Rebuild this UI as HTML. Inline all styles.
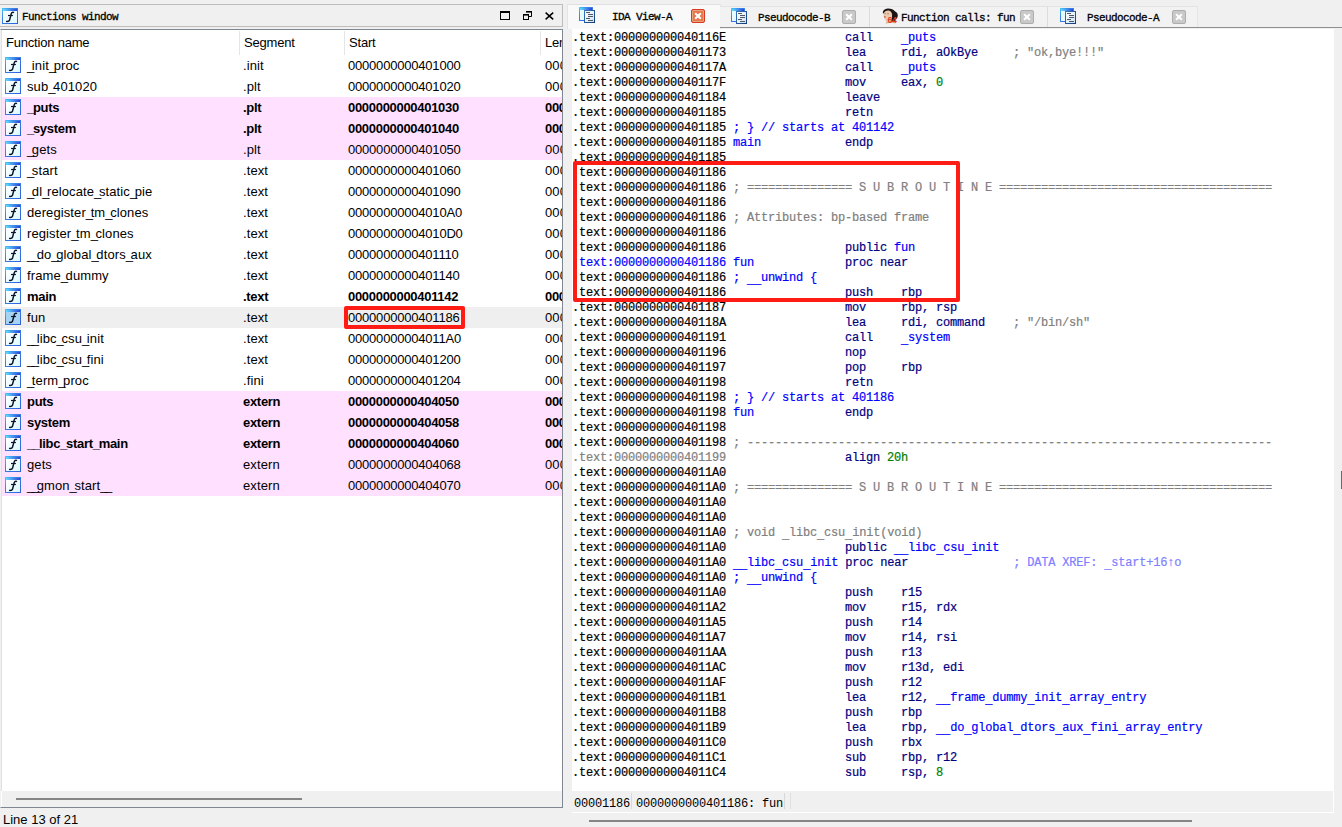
<!DOCTYPE html>
<html><head><meta charset="utf-8">
<style>
html,body{margin:0;padding:0;}
body{width:1342px;height:827px;overflow:hidden;background:#f0f0f0;position:relative;font-family:"Liberation Sans",sans-serif;}
.abs{position:absolute;}
/* left title bar */
#ltitle{position:absolute;left:0;top:4px;width:562px;height:21px;border:1px solid #bdbdbd;border-left:none;background:#f0f0f0;}
#ltitle .tt{position:absolute;left:22px;top:6px;font-family:"Liberation Mono",monospace;font-size:11px;letter-spacing:-0.6px;-webkit-text-stroke:0.3px #000;color:#000;}
#llist{overflow:hidden;position:absolute;left:1px;top:29px;width:561px;height:778px;border:1px solid #7f8892;border-left:1px solid #f0f0f0;border-right:1px solid #7f8892;border-top:1px solid #7f8892;background:#fff;box-sizing:border-box;width:563px;height:779px;left:0;}
.hdr{position:absolute;top:1px;height:25px;font-size:13px;color:#000;letter-spacing:-0.2px;}
.sep{position:absolute;top:1px;width:1px;height:24px;background:#e5e5e5;}
.r{position:absolute;left:1px;width:560px;height:21px;font-size:13px;color:#000;white-space:nowrap;letter-spacing:0.1px;}
.r.pk{background:#ffe0ff;}
.r.sel{background:#efefef;}
.r.b{font-weight:bold;letter-spacing:-0.3px;}
.r .fi{position:absolute;left:3px;top:2px;}
.r > span{position:absolute;top:3px;} .u{letter-spacing:-2.4px;} .r.b .u{letter-spacing:-1.3px;}
.c1{left:25px;} .c2{left:241px;} .c3{left:346px;letter-spacing:-0.2px;} .r.b .c3{letter-spacing:-0.3px;} .c4{left:543px;}
#lhs{position:absolute;left:1px;top:761px;width:560px;height:16px;background:#f0f0f0;}
#lhs .th{position:absolute;left:14px;top:7px;width:286px;height:2px;background:#858585;}
#status{position:absolute;left:3px;top:812px;font-size:13px;color:#000;}
/* right */
.tab{position:absolute;top:6px;height:20px;background:#f2f2f2;border-top:1px solid #e3e3e3;}
.tab > *{margin-top:-1px;}
.tab.act{top:4px;height:24px;background:#f9f9f9;border-left:1px solid #e4e4e4;border-top:1px solid #e0e0e0;border-right:1px solid #e6e6e6;}
.tab.act > *{margin-top:0;}
.tabtxt{position:absolute;top:6px;font-family:"Liberation Mono",monospace;font-size:11px;letter-spacing:-0.6px;-webkit-text-stroke:0.3px #000;color:#000;white-space:pre;}
#tabline{position:absolute;left:720px;top:27px;width:622px;height:1px;background:#8f8f8f;}
#code{position:absolute;left:572px;top:29px;width:762px;height:762px;background:#fff;overflow:hidden;}
.l{position:absolute;left:0px;height:15px;line-height:15px;white-space:pre;font-family:"Liberation Mono",monospace;font-size:12px;letter-spacing:-0.2px;color:#000;-webkit-text-stroke-width:0.2px;}
.l i{font-style:normal;position:relative;top:1.5px;} .a{color:#000;} .ag{color:#808080;} .ab{color:#0000ff;}
.k{color:#000080;} .n{color:#0000ff;} .c{color:#808080;} .x{color:#8080ff;} .g{color:#008000;}
#rstat{position:absolute;left:572px;top:791px;width:761px;height:21px;background:#f0f0f0;border-bottom:1px solid #fff;border-right:1px solid #fff;}
#rstat .st{position:absolute;top:6px;font-family:"Liberation Mono",monospace;font-size:12px;letter-spacing:-0.2px;color:#000;white-space:pre;}
#rhs{position:absolute;left:589px;top:820px;width:603px;height:2px;background:#858585;}
#vs{position:absolute;left:1334px;top:29px;width:8px;height:762px;background:#f0f0f0;}
#vs .th{position:absolute;left:7px;top:442px;width:1px;height:18px;background:#6a6a6a;}
.redbox{position:absolute;border:4px solid #ff1c14;border-radius:2px;box-sizing:border-box;}
.cls{position:absolute;width:14px;height:14px;box-sizing:border-box;border:1px solid #adadad;border-radius:2px;background:#c9c9c9;}
.cls:before,.cls:after{content:"";position:absolute;left:2px;top:5px;width:8px;height:2px;background:#fff;transform:rotate(45deg);}
.cls:after{transform:rotate(-45deg);}
.cls.red{border-color:#d93a22;background:#e47a4c;box-shadow:inset 0 0 0 1px #eda07e;}
</style></head><body>
<svg width="0" height="0" style="position:absolute">
<defs>
<linearGradient id="fbar" x1="0" y1="0" x2="1" y2="0"><stop offset="0" stop-color="#62dcff"/><stop offset="1" stop-color="#2a44d8"/></linearGradient>
<linearGradient id="fbody" x1="0" y1="0" x2="1" y2="1"><stop offset="0" stop-color="#ffffff"/><stop offset="1" stop-color="#dcfaff"/></linearGradient>
<linearGradient id="fbord" x1="0" y1="0" x2="1" y2="1"><stop offset="0" stop-color="#48c8f8"/><stop offset="0.35" stop-color="#3a82e8"/><stop offset="1" stop-color="#3060d8"/></linearGradient>
<linearGradient id="dbody" x1="0" y1="0" x2="1" y2="1"><stop offset="0" stop-color="#ffffff"/><stop offset="1" stop-color="#cfe2fa"/></linearGradient>
<linearGradient id="dbord" x1="0" y1="0" x2="1" y2="1"><stop offset="0" stop-color="#3c78c0"/><stop offset="1" stop-color="#103a78"/></linearGradient>
<symbol id="ficon" viewBox="0 0 16 16">
<rect x="0" y="0" width="16" height="16" fill="url(#fbord)"/>
<rect x="1" y="3" width="14" height="12" fill="url(#fbody)"/>
<rect x="1" y="1" width="14" height="2" fill="url(#fbar)"/>
<path d="M12.0 4.6 C10.8 3.9 9.6 4.5 9.2 6.0 L7.5 12.2 C7.2 13.3 6.3 13.7 4.0 13.4" fill="none" stroke="#0c1428" stroke-width="1.45"/>
<path d="M6.0 7.5 H10.9" stroke="#0c1428" stroke-width="1.2"/>
</symbol>
<symbol id="ficonsel" viewBox="0 0 16 16">
<rect x="0" y="0" width="16" height="16" fill="url(#fbord)"/>
<rect x="1" y="3" width="14" height="12" fill="#a6d3f2"/>
<rect x="1" y="1" width="14" height="2" fill="url(#fbar)"/>
<path d="M12.0 4.6 C10.8 3.9 9.6 4.5 9.2 6.0 L7.5 12.2 C7.2 13.3 6.3 13.7 4.0 13.4" fill="none" stroke="#0c1428" stroke-width="1.45"/>
<path d="M6.0 7.5 H10.9" stroke="#0c1428" stroke-width="1.2"/>
</symbol>
<symbol id="docicon" viewBox="0 0 16 16">
<rect x="0" y="0" width="14" height="14" rx="0.5" fill="url(#fbord)"/>
<rect x="1" y="3" width="12" height="10" fill="#e4fcff"/>
<rect x="1" y="1" width="12" height="2" fill="url(#fbar)"/>
<rect x="5" y="3" width="11" height="13" fill="url(#dbord)"/>
<rect x="6" y="4" width="9" height="11" fill="url(#dbody)"/>
<g fill="#505860"><rect x="7" y="5" width="4" height="1"/><rect x="9" y="7" width="5" height="1"/><rect x="9" y="9" width="5" height="1"/><rect x="7" y="11" width="4" height="1"/><rect x="9" y="13" width="5" height="1"/></g>
</symbol>
<symbol id="face" viewBox="0 0 16 16">
<path d="M3.5 15.6 C5 14.8 11 14.6 13.2 15.4 L12.5 13 L5 13 Z" fill="#dcae90"/>
<path d="M0.9 5.2 C0.5 2.6 2.6 0.6 5.6 0.4 C8.8 0.2 11.6 1.4 13.1 3.4 C14.8 4.1 16.1 5.8 15.7 8.2 C15.4 10.2 14.4 11.3 13.3 11.8 L12.2 13.5 L9.2 13.2 L9.4 6 C7.6 4 4.2 3.6 2.2 5.6 Z" fill="#1c1414"/>
<path d="M1.7 5.6 C2.4 3.2 4.8 2.2 7.4 2.7 C9.4 3.2 10.3 5.6 10.1 8.1 C9.9 10.6 9 12.6 7.5 13.6 C6 14.6 4.5 14.1 3.4 12.6 C2.2 10.9 1.3 8.2 1.7 5.6 Z" fill="#eccaae"/>
<rect x="2.4" y="5.4" width="1.6" height="0.8" fill="#9a7262"/>
<rect x="5.2" y="5.4" width="1.6" height="0.8" fill="#9a7262"/>
<ellipse cx="2.9" cy="8.9" rx="0.9" ry="0.7" fill="#b83a2a"/>
<text x="5.6" y="15.0" font-family="Liberation Sans" font-weight="bold" font-size="8.6" fill="#e43a1c" letter-spacing="-0.3">64</text>
</symbol>
</defs></svg>

<div id="ltitle">
  <svg class="abs" style="left:2px;top:3px" width="16" height="16"><use href="#ficon"/></svg>
  <div class="tt">Functions window</div>
  <svg class="abs" style="left:500px;top:6px" width="10" height="9" viewBox="0 0 10 9"><rect x="0.5" y="1" width="9" height="7.5" fill="none" stroke="#000" stroke-width="1"/><rect x="0" y="0" width="10" height="2" fill="#000"/></svg>
  <svg class="abs" style="left:523px;top:6px" width="9" height="9" viewBox="0 0 9 9"><path d="M3 0.5 H8.5 V5.5 H6" fill="none" stroke="#000"/><rect x="3" y="0" width="6" height="1.6" fill="#000"/><rect x="0.5" y="3.5" width="5" height="5" fill="#f0f0f0" stroke="#000"/><rect x="0" y="3" width="6" height="1.6" fill="#000"/></svg>
  <svg class="abs" style="left:545px;top:7px" width="9" height="8" viewBox="0 0 9 8"><path d="M0.6 0.6 L8.2 7.4 M8.2 0.6 L0.6 7.4" stroke="#000" stroke-width="1.5"/></svg>
</div>

<div id="llist">
  <div class="hdr" style="left:5px;top:5px">Function name</div>
  <div class="sep" style="left:238px"></div>
  <div class="hdr" style="left:243px;top:5px">Segment</div>
  <div class="sep" style="left:343px"></div>
  <div class="hdr" style="left:348px;top:5px">Start</div>
  <div class="sep" style="left:539px"></div>
  <div class="hdr" style="left:544px;top:5px">Len</div>
  <div style="position:absolute;left:0;top:0;">
<div class="r" style="top:25px"><svg class="fi" width="16" height="16"><use href="#ficon"/></svg><span class="c1"><span class="u">_</span>init<span class="u">_</span>proc</span><span class="c2">.init</span><span class="c3">0000000000401000</span><span class="c4">000</span></div>
<div class="r" style="top:46px"><svg class="fi" width="16" height="16"><use href="#ficon"/></svg><span class="c1">sub<span class="u">_</span>401020</span><span class="c2">.plt</span><span class="c3">0000000000401020</span><span class="c4">000</span></div>
<div class="r pk b" style="top:67px"><svg class="fi" width="16" height="16"><use href="#ficon"/></svg><span class="c1"><span class="u">_</span>puts</span><span class="c2">.plt</span><span class="c3">0000000000401030</span><span class="c4">000</span></div>
<div class="r pk b" style="top:88px"><svg class="fi" width="16" height="16"><use href="#ficon"/></svg><span class="c1"><span class="u">_</span>system</span><span class="c2">.plt</span><span class="c3">0000000000401040</span><span class="c4">000</span></div>
<div class="r pk" style="top:109px"><svg class="fi" width="16" height="16"><use href="#ficon"/></svg><span class="c1"><span class="u">_</span>gets</span><span class="c2">.plt</span><span class="c3">0000000000401050</span><span class="c4">000</span></div>
<div class="r" style="top:130px"><svg class="fi" width="16" height="16"><use href="#ficon"/></svg><span class="c1"><span class="u">_</span>start</span><span class="c2">.text</span><span class="c3">0000000000401060</span><span class="c4">000</span></div>
<div class="r" style="top:151px"><svg class="fi" width="16" height="16"><use href="#ficon"/></svg><span class="c1"><span class="u">_</span>dl<span class="u">_</span>relocate<span class="u">_</span>static<span class="u">_</span>pie</span><span class="c2">.text</span><span class="c3">0000000000401090</span><span class="c4">000</span></div>
<div class="r" style="top:172px"><svg class="fi" width="16" height="16"><use href="#ficon"/></svg><span class="c1">deregister<span class="u">_</span>tm<span class="u">_</span>clones</span><span class="c2">.text</span><span class="c3">00000000004010A0</span><span class="c4">000</span></div>
<div class="r" style="top:193px"><svg class="fi" width="16" height="16"><use href="#ficon"/></svg><span class="c1">register<span class="u">_</span>tm<span class="u">_</span>clones</span><span class="c2">.text</span><span class="c3">00000000004010D0</span><span class="c4">000</span></div>
<div class="r" style="top:214px"><svg class="fi" width="16" height="16"><use href="#ficon"/></svg><span class="c1"><span class="u">_</span><span class="u">_</span>do<span class="u">_</span>global<span class="u">_</span>dtors<span class="u">_</span>aux</span><span class="c2">.text</span><span class="c3">0000000000401110</span><span class="c4">000</span></div>
<div class="r" style="top:235px"><svg class="fi" width="16" height="16"><use href="#ficon"/></svg><span class="c1">frame<span class="u">_</span>dummy</span><span class="c2">.text</span><span class="c3">0000000000401140</span><span class="c4">000</span></div>
<div class="r b" style="top:256px"><svg class="fi" width="16" height="16"><use href="#ficon"/></svg><span class="c1">main</span><span class="c2">.text</span><span class="c3">0000000000401142</span><span class="c4">000</span></div>
<div class="r sel" style="top:277px"><svg class="fi" width="16" height="16"><use href="#ficonsel"/></svg><span class="c1">fun</span><span class="c2">.text</span><span class="c3">0000000000401186</span><span class="c4">000</span></div>
<div class="r" style="top:298px"><svg class="fi" width="16" height="16"><use href="#ficon"/></svg><span class="c1"><span class="u">_</span><span class="u">_</span>libc<span class="u">_</span>csu<span class="u">_</span>init</span><span class="c2">.text</span><span class="c3">00000000004011A0</span><span class="c4">000</span></div>
<div class="r" style="top:319px"><svg class="fi" width="16" height="16"><use href="#ficon"/></svg><span class="c1"><span class="u">_</span><span class="u">_</span>libc<span class="u">_</span>csu<span class="u">_</span>fini</span><span class="c2">.text</span><span class="c3">0000000000401200</span><span class="c4">000</span></div>
<div class="r" style="top:340px"><svg class="fi" width="16" height="16"><use href="#ficon"/></svg><span class="c1"><span class="u">_</span>term<span class="u">_</span>proc</span><span class="c2">.fini</span><span class="c3">0000000000401204</span><span class="c4">000</span></div>
<div class="r pk b" style="top:361px"><svg class="fi" width="16" height="16"><use href="#ficon"/></svg><span class="c1">puts</span><span class="c2">extern</span><span class="c3">0000000000404050</span><span class="c4">000</span></div>
<div class="r pk b" style="top:382px"><svg class="fi" width="16" height="16"><use href="#ficon"/></svg><span class="c1">system</span><span class="c2">extern</span><span class="c3">0000000000404058</span><span class="c4">000</span></div>
<div class="r pk b" style="top:403px"><svg class="fi" width="16" height="16"><use href="#ficon"/></svg><span class="c1"><span class="u">_</span><span class="u">_</span>libc<span class="u">_</span>start<span class="u">_</span>main</span><span class="c2">extern</span><span class="c3">0000000000404060</span><span class="c4">000</span></div>
<div class="r pk" style="top:424px"><svg class="fi" width="16" height="16"><use href="#ficon"/></svg><span class="c1">gets</span><span class="c2">extern</span><span class="c3">0000000000404068</span><span class="c4">000</span></div>
<div class="r pk" style="top:445px"><svg class="fi" width="16" height="16"><use href="#ficon"/></svg><span class="c1"><span class="u">_</span><span class="u">_</span>gmon<span class="u">_</span>start<span class="u">_</span><span class="u">_</span></span><span class="c2">extern</span><span class="c3">0000000000404070</span><span class="c4">000</span></div>
  </div>
  <div style="position:absolute;left:0;top:0;width:1px;height:761px;background:#e0e0e0"></div>
  <div id="lhs"><div class="th"></div></div>
</div>
<div id="status">Line 13 of 21</div>

<!-- tabs -->
<div class="tab act" style="left:567px;width:152px;">
  <svg class="abs" style="left:11px;top:2px" width="16" height="16"><use href="#docicon"/></svg>
  <div class="tabtxt" style="left:44px">IDA View-A</div>
  <div class="cls red" style="left:123px;top:4px"></div>
</div>
<div class="tab" style="left:720px;width:149px;border-right:1px solid #dcdcdc;">
  <svg class="abs" style="left:11px;top:2px" width="16" height="16"><use href="#docicon"/></svg>
  <div class="tabtxt" style="left:38px">Pseudocode-B</div>
  <div class="cls" style="left:122px;top:4px"></div>
</div>
<div class="tab" style="left:870px;width:177px;border-right:1px solid #dcdcdc;">
  <svg class="abs" style="left:12px;top:2px" width="16" height="16"><use href="#face"/></svg>
  <div class="tabtxt" style="left:31px">Function calls: fun</div>
  <div class="cls" style="left:150px;top:4px"></div>
</div>
<div class="tab" style="left:1048px;width:149px;border-right:1px solid #e4e4e4;">
  <svg class="abs" style="left:12px;top:2px" width="16" height="16"><use href="#docicon"/></svg>
  <div class="tabtxt" style="left:39px">Pseudocode-A</div>
  <div class="cls" style="left:124px;top:4px"></div>
</div>
<div id="tabline"></div>

<div id="code">
<div class="l" style="top:2px"><span class="a">.text:000000000040116E</span>                 <span class="k">call    </span><span class="n"><i>_</i>puts</span></div>
<div class="l" style="top:17px"><span class="a">.text:0000000000401173</span>                 <span class="k">lea     </span><span class="k">rdi, aOkBye</span>     <span class="c">; &quot;ok,bye!!!&quot;</span></div>
<div class="l" style="top:32px"><span class="a">.text:000000000040117A</span>                 <span class="k">call    </span><span class="n"><i>_</i>puts</span></div>
<div class="l" style="top:47px"><span class="a">.text:000000000040117F</span>                 <span class="k">mov     </span><span class="k">eax, </span><span class="g">0</span></div>
<div class="l" style="top:62px"><span class="a">.text:0000000000401184</span>                 <span class="k">leave</span></div>
<div class="l" style="top:77px"><span class="a">.text:0000000000401185</span>                 <span class="k">retn</span></div>
<div class="l" style="top:92px"><span class="a">.text:0000000000401185</span><span class="n"> ; } // starts at 401142</span></div>
<div class="l" style="top:107px"><span class="a">.text:0000000000401185</span><span class="n"> main</span>            <span class="k">endp</span></div>
<div class="l" style="top:122px"><span class="a">.text:0000000000401185</span></div>
<div class="l" style="top:137px"><span class="a">.text:0000000000401186</span></div>
<div class="l" style="top:152px"><span class="a">.text:0000000000401186</span><span class="c"> ; =============== S U B R O U T I N E =======================================</span></div>
<div class="l" style="top:167px"><span class="a">.text:0000000000401186</span></div>
<div class="l" style="top:182px"><span class="a">.text:0000000000401186</span><span class="c"> ; Attributes: bp-based frame</span></div>
<div class="l" style="top:197px"><span class="a">.text:0000000000401186</span></div>
<div class="l" style="top:212px"><span class="a">.text:0000000000401186</span>                 <span class="k">public </span><span class="n">fun</span></div>
<div class="l" style="top:227px"><span class="ab">.text:0000000000401186</span><span class="n"> fun</span>             <span class="k">proc near</span></div>
<div class="l" style="top:242px"><span class="a">.text:0000000000401186</span><span class="n"> ; <i>_</i><i>_</i>unwind {</span></div>
<div class="l" style="top:257px"><span class="a">.text:0000000000401186</span>                 <span class="k">push    </span><span class="k">rbp</span></div>
<div class="l" style="top:272px"><span class="a">.text:0000000000401187</span>                 <span class="k">mov     </span><span class="k">rbp, rsp</span></div>
<div class="l" style="top:287px"><span class="a">.text:000000000040118A</span>                 <span class="k">lea     </span><span class="k">rdi, command</span>    <span class="c">; &quot;/bin/sh&quot;</span></div>
<div class="l" style="top:302px"><span class="a">.text:0000000000401191</span>                 <span class="k">call    </span><span class="n"><i>_</i>system</span></div>
<div class="l" style="top:317px"><span class="a">.text:0000000000401196</span>                 <span class="k">nop</span></div>
<div class="l" style="top:332px"><span class="a">.text:0000000000401197</span>                 <span class="k">pop     </span><span class="k">rbp</span></div>
<div class="l" style="top:347px"><span class="a">.text:0000000000401198</span>                 <span class="k">retn</span></div>
<div class="l" style="top:362px"><span class="a">.text:0000000000401198</span><span class="n"> ; } // starts at 401186</span></div>
<div class="l" style="top:377px"><span class="a">.text:0000000000401198</span><span class="n"> fun</span>             <span class="k">endp</span></div>
<div class="l" style="top:392px"><span class="a">.text:0000000000401198</span></div>
<div class="l" style="top:407px"><span class="a">.text:0000000000401198</span><span class="c"> ; ---------------------------------------------------------------------------</span></div>
<div class="l" style="top:422px"><span class="ag">.text:0000000000401199</span>                 <span class="k">align </span><span class="g">20h</span></div>
<div class="l" style="top:437px"><span class="a">.text:00000000004011A0</span></div>
<div class="l" style="top:452px"><span class="a">.text:00000000004011A0</span><span class="c"> ; =============== S U B R O U T I N E =======================================</span></div>
<div class="l" style="top:467px"><span class="a">.text:00000000004011A0</span></div>
<div class="l" style="top:482px"><span class="a">.text:00000000004011A0</span></div>
<div class="l" style="top:497px"><span class="a">.text:00000000004011A0</span><span class="c"> ; void <i>_</i>libc<i>_</i>csu<i>_</i>init(void)</span></div>
<div class="l" style="top:512px"><span class="a">.text:00000000004011A0</span>                 <span class="k">public </span><span class="n"><i>_</i><i>_</i>libc<i>_</i>csu<i>_</i>init</span></div>
<div class="l" style="top:527px"><span class="a">.text:00000000004011A0</span><span class="n"> <i>_</i><i>_</i>libc<i>_</i>csu<i>_</i>init</span><span class="k"> proc near</span>               <span class="x">; DATA XREF: <i>_</i>start+16↑o</span></div>
<div class="l" style="top:542px"><span class="a">.text:00000000004011A0</span><span class="n"> ; <i>_</i><i>_</i>unwind {</span></div>
<div class="l" style="top:557px"><span class="a">.text:00000000004011A0</span>                 <span class="k">push    </span><span class="k">r15</span></div>
<div class="l" style="top:572px"><span class="a">.text:00000000004011A2</span>                 <span class="k">mov     </span><span class="k">r15, rdx</span></div>
<div class="l" style="top:587px"><span class="a">.text:00000000004011A5</span>                 <span class="k">push    </span><span class="k">r14</span></div>
<div class="l" style="top:602px"><span class="a">.text:00000000004011A7</span>                 <span class="k">mov     </span><span class="k">r14, rsi</span></div>
<div class="l" style="top:617px"><span class="a">.text:00000000004011AA</span>                 <span class="k">push    </span><span class="k">r13</span></div>
<div class="l" style="top:632px"><span class="a">.text:00000000004011AC</span>                 <span class="k">mov     </span><span class="k">r13d, edi</span></div>
<div class="l" style="top:647px"><span class="a">.text:00000000004011AF</span>                 <span class="k">push    </span><span class="k">r12</span></div>
<div class="l" style="top:662px"><span class="a">.text:00000000004011B1</span>                 <span class="k">lea     </span><span class="k">r12, </span><span class="n"><i>_</i><i>_</i>frame<i>_</i>dummy<i>_</i>init<i>_</i>array<i>_</i>entry</span></div>
<div class="l" style="top:677px"><span class="a">.text:00000000004011B8</span>                 <span class="k">push    </span><span class="k">rbp</span></div>
<div class="l" style="top:692px"><span class="a">.text:00000000004011B9</span>                 <span class="k">lea     </span><span class="k">rbp, </span><span class="n"><i>_</i><i>_</i>do<i>_</i>global<i>_</i>dtors<i>_</i>aux<i>_</i>fini<i>_</i>array<i>_</i>entry</span></div>
<div class="l" style="top:707px"><span class="a">.text:00000000004011C0</span>                 <span class="k">push    </span><span class="k">rbx</span></div>
<div class="l" style="top:722px"><span class="a">.text:00000000004011C1</span>                 <span class="k">sub     </span><span class="k">rbp, r12</span></div>
<div class="l" style="top:737px"><span class="a">.text:00000000004011C4</span>                 <span class="k">sub     </span><span class="k">rsp, </span><span class="g">8</span></div>
</div>
<div id="vs"><div class="th"></div></div>
<div id="rstat">
  <div class="st" style="left:2px">00001186</div>
  <div style="position:absolute;left:59px;top:2px;width:1px;height:16px;background:#d8d8d8"></div>
  <div class="st" style="left:64px">0000000000401186: fun</div>
  <div style="position:absolute;left:212px;top:2px;width:1px;height:16px;background:#d8d8d8"></div><div style="position:absolute;left:218px;top:2px;width:1px;height:16px;background:#e0e0e0"></div>
</div>
<div id="rhs"></div>

<div class="redbox" style="left:344px;top:306px;width:121px;height:23px;"></div>
<div class="redbox" style="left:573px;top:161px;width:387px;height:141px;"></div>
</body></html>
